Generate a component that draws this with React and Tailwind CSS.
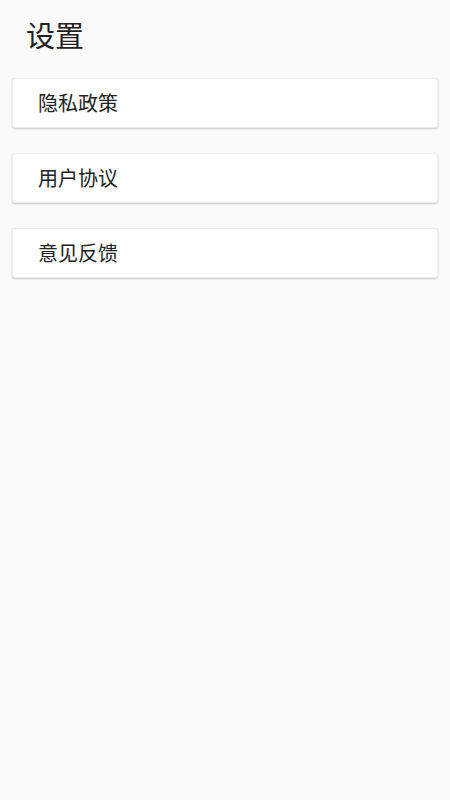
export default function App() {
  const items = ['隐私政策', '用户协议', '意见反馈'];
  return (
    <div
      className="min-h-[800px] bg-[#fafafa] text-[#222]"
      style={{ fontFamily: '"Noto Sans CJK SC", "Noto Sans", sans-serif' }}
    >
      <h1 className="pl-[26px] pt-[13px] text-[29px] leading-[42px]">设置</h1>
      <div className="mt-[23px] flex flex-col gap-[25px] px-3">
        {items.map((t) => (
          <div
            key={t}
            className="flex h-[50px] items-center rounded-[3px] border border-[#ececec] bg-white pl-[25px] text-[20px] shadow-[0_1px_2px_rgba(0,0,0,0.2)]"
          >
            {t}
          </div>
        ))}
      </div>
    </div>
  );
}
